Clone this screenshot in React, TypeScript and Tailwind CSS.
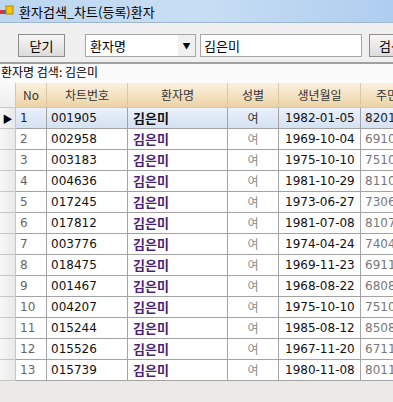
const rows: [string, string, string][] = [
  ['001905', '1982-01-05', '8201'],
  ['002958', '1969-10-04', '6910'],
  ['003183', '1975-10-10', '7510'],
  ['004636', '1981-10-29', '8110'],
  ['017245', '1973-06-27', '7306'],
  ['017812', '1981-07-08', '8107'],
  ['003776', '1974-04-24', '7404'],
  ['018475', '1969-11-23', '6911'],
  ['001467', '1968-08-22', '6808'],
  ['004207', '1975-10-10', '7510'],
  ['015244', '1985-08-12', '8508'],
  ['015526', '1967-11-20', '6711'],
  ['015739', '1980-11-08', '8011'],
]

const ko = { fontFamily: '"Noto Sans CJK KR", "DejaVu Sans", sans-serif' }
const num = { fontFamily: '"DejaVu Sans", "Noto Sans CJK KR", sans-serif' }

const cols = 'grid grid-cols-[16px_31px_81px_100px_51px_82px_80px]'

function AppIcon() {
  return (
    <svg width="14" height="12" viewBox="0 0 14 12" className="shrink-0">
      <rect x="0" y="5" width="4" height="4" fill="#d33" />
      <rect x="4" y="5" width="3" height="4" fill="#36c" />
      <rect x="6" y="1" width="7" height="8" fill="#f5c400" stroke="#b08a00" strokeWidth="1" />
    </svg>
  )
}

export default function App() {
  return (
    <div className="w-[393px] h-[402px] overflow-hidden bg-[#ebeae6] flex flex-col" style={ko}>
      {/* title bar */}
      <div className="h-[23px] shrink-0 flex items-center gap-[5px] bg-gradient-to-r from-[#bcd6f0] via-[#c8def4] to-[#aecdef] border-b border-[#9fb6cf]">
        <AppIcon />
        <span className="text-[13px] text-black leading-none">환자검색_차트(등록)환자</span>
      </div>

      {/* toolbar */}
      <div className="h-[41px] shrink-0 bg-[#f0f0f0] border-b-2 border-[#a0a0a0] flex items-start pt-[11px] overflow-hidden">
        <button className="shrink-0 ml-[18px] w-[47px] h-[23px] border border-[#8d8d8d] bg-gradient-to-b from-[#f6f6f6] to-[#dcdcdc] text-[13px] leading-none text-black">
          닫기
        </button>
        <div className="shrink-0 ml-[20px] w-[111px] h-[23px] border border-[#a6a6a6] bg-white flex items-center">
          <span className="pl-[4px] flex-1 text-[13px] leading-none">환자명</span>
          <span className="w-[17px] h-full flex items-center justify-center bg-[#f0f0f0] text-[8px]">▼</span>
        </div>
        <div className="shrink-0 ml-[4px] w-[162px] h-[23px] border border-[#a6a6a6] bg-white flex items-center pl-[3px] text-[13px] leading-none">
          김은미
        </div>
        <button className="shrink-0 ml-[7px] w-[40px] h-[23px] border border-[#8d8d8d] bg-gradient-to-b from-[#f6f6f6] to-[#dcdcdc] text-[13px] leading-none text-left pl-[9px]">
          검색
        </button>
      </div>

      {/* label */}
      <div className="h-[16px] shrink-0 bg-[#fbfbfb] flex items-center text-[12px] leading-none pl-[1px]">
        환자명 검색: 김은미
      </div>
      <div className="h-[3px] shrink-0 bg-[#fbfbfb]" />

      {/* grid */}
      <div className="flex-1 overflow-hidden">
        <div className={`${cols} h-[25px] text-[12px] text-[#333]`}>
          <div className="bg-gradient-to-b from-[#fafafa] to-[#eeeeee] border-r border-b border-[#c8c8c8]" />
          {['No', '차트번호', '환자명', '성별', '생년월일', '주민'].map((h, i) => (
            <div
              key={h}
              className={`bg-gradient-to-b from-[#fbf1df] to-[#ecd3a6] border-r border-b border-[#d9c7a6] flex items-center ${
                i === 5 ? 'justify-start pl-[15px]' : 'justify-center'
              }`}
            >
              {h}
            </div>
          ))}
        </div>

        {rows.map(([chart, birth, jumin], i) => {
          const sel = i === 0
          const cell = `border-r border-b border-[#a3a3a3] flex items-center h-[21px] ${
            sel ? 'bg-gradient-to-b from-[#eaf1fa] to-[#d4e1f2]' : 'bg-white'
          }`
          return (
            <div key={chart + i} className={cols}>
              <div className="h-[21px] bg-gradient-to-r from-[#f7f7f7] to-[#e9e9e9] border-r border-b border-[#c6c6c6] flex items-center justify-center text-[10px]">
                {sel ? '▶' : ''}
              </div>
              <div className={`${cell} pl-[4px] text-[12px] ${sel ? 'text-[#222]' : 'text-[#666]'}`} style={num}>
                {i + 1}
              </div>
              <div className={`${cell} pl-[4px] text-[12px] text-[#111]`} style={num}>
                {chart}
              </div>
              <div className={`${cell} pl-[5px] text-[13px] font-bold ${sel ? 'text-[#111]' : 'text-[#4b1f74]'}`}>
                김은미
              </div>
              <div className={`${cell} justify-center text-[12px] ${sel ? 'text-[#333]' : 'text-[#8a8a8a]'}`}>
                여
              </div>
              <div className={`${cell} pl-[6px] text-[12px] text-[#111]`} style={num}>
                {birth}
              </div>
              <div className={`${cell} pl-[4px] text-[12px] ${sel ? 'text-[#222]' : 'text-[#777]'}`} style={num}>
                {jumin}
              </div>
            </div>
          )
        })}
      </div>
    </div>
  )
}
